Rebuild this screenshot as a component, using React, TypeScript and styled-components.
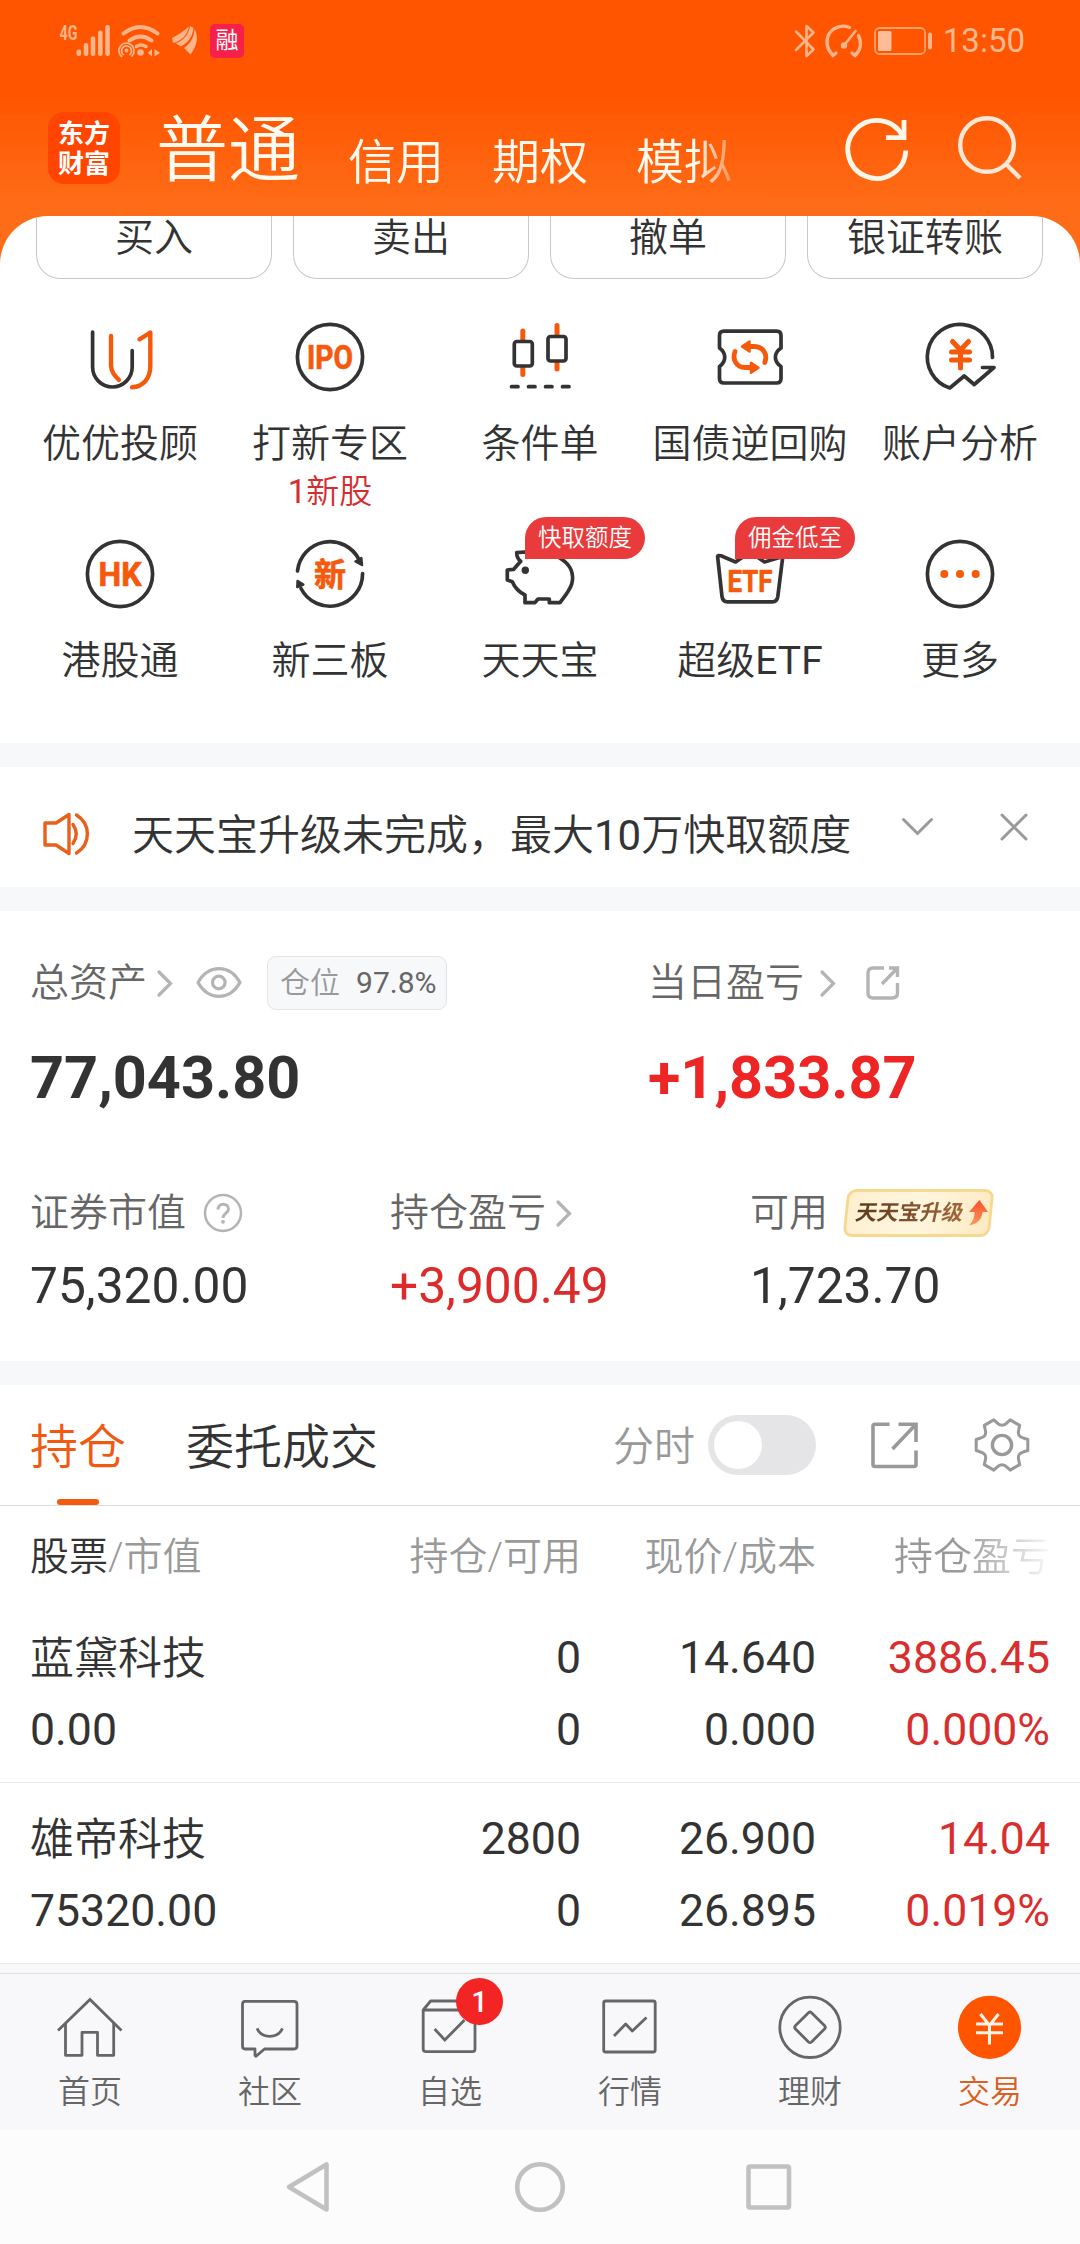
import React from "react";
import styled, { createGlobalStyle } from "styled-components";

const GlobalStyle = createGlobalStyle`
  * { box-sizing: border-box; }
  body {
    margin: 0;
    background: #fff;
    font-family: Roboto, "Noto Sans CJK SC", sans-serif;
    font-weight: 350;
    color: #333;
  }
  svg { display: block; flex: none; overflow: visible; }
`;

const INK = "#333";
const ORANGE = "#f55a0c";

/* ---------- layout ---------- */

const Screen = styled.div`
  width: 1080px;
  height: 2244px;
  overflow: hidden;
  display: flex;
  flex-direction: column;
  background: linear-gradient(180deg, #ff5500 0, #ff5500 95px, #ff6c17 205px, #ff6c17 300px, #fff 301px);
`;

const StatusBar = styled.div`
  height: 82px;
  flex: none;
  display: flex;
  justify-content: space-between;
  padding: 0 55px 0 58px;
`;

const StatusGroup = styled.div`
  display: flex;
  height: 82px;
  align-items: center;
`;

const Clock = styled.span`
  font-size: 33px;
  font-weight: 400;
  line-height: 40px;
  margin-left: 10px;
  color: #ffb88f;
`;

const AppBadge = styled.span`
  width: 34px;
  height: 34px;
  margin-left: 12px;
  border-radius: 5px;
  background: #f6204a;
  color: #fff;
  font-size: 23px;
  line-height: 34px;
  font-weight: 400;
  text-align: center;
`;

const Header = styled.header`
  height: 134px;
  flex: none;
  display: flex;
  align-items: flex-start;
  padding: 30px 59px 0 48px;
`;

const Logo = styled.div`
  width: 72px;
  height: 72px;
  border-radius: 16px;
  background: #ff4500;
  color: #fff;
  font-size: 26px;
  line-height: 30px;
  font-weight: 700;
  text-align: center;
  padding-top: 7px;
`;

const AccountTabs = styled.nav`
  display: flex;
  align-items: flex-end;
  gap: 48px;
  width: 596px;
  margin-left: 36px;
  margin-top: -9px;
  white-space: nowrap;
  mask-image: linear-gradient(90deg, #000 540px, transparent 592px);
`;

const AccountTab = styled.span<{ $active?: boolean }>`
  font-size: ${(p) => (p.$active ? 72 : 48)}px;
  line-height: ${(p) => (p.$active ? 96 : 72)}px;
  color: #fffaf0;
`;

const HeaderActions = styled.div`
  display: flex;
  gap: 42px;
  margin-left: auto;
`;

const Panel = styled.section`
  height: 527px;
  flex: none;
  overflow: hidden;
  border-radius: 48px 48px 0 0;
  background: #fff;
`;

const QuickRow = styled.div`
  display: grid;
  grid-template-columns: repeat(4, 236px);
  gap: 21px;
  padding: 0 36px;
`;

const QuickButton = styled.div`
  height: 63px;
  border: 1px solid #c8c8c8;
  border-top: 0;
  border-radius: 0 0 24px 24px;
  text-align: center;
  font-size: 39px;
  line-height: 44px;
`;

const FeatureGrid = styled.div`
  display: grid;
  grid-template-columns: repeat(5, 210px);
  grid-template-rows: 217px 205px;
  padding: 42px 15px 0;
`;

const Feature = styled.div`
  position: relative;
  display: flex;
  flex-direction: column;
  align-items: center;
`;

const FeatureLabel = styled.span`
  margin-top: 24px;
  font-size: 39px;
  line-height: 54px;
  white-space: nowrap;
`;

const FeatureNote = styled.span`
  font-size: 33px;
  line-height: 42px;
  color: #d32f2f;
`;

const FeatureBadge = styled.span`
  position: absolute;
  left: 90px;
  top: -21px;
  width: 120px;
  height: 42px;
  border-radius: 21px 21px 21px 0;
  background: #ea3b3c;
  color: #fff;
  font-size: 23.5px;
  line-height: 42px;
  text-align: center;
`;

const Latin = styled.span`
  font-weight: 400;
`;

const Strip = styled.div<{ $h: number }>`
  height: ${(p) => p.$h}px;
  flex: none;
  background: #f7f8fa;
`;

const Notice = styled.section`
  height: 120px;
  flex: none;
  display: flex;
  align-items: center;
  padding: 0 51px 0 42px;
  background: #fff;
`;

const NoticeIcon = styled.span`
  margin-top: 13px;
`;

const NoticeText = styled.span`
  flex: 1;
  margin: 18px 0 0 42px;
  font-size: 42px;
  line-height: 54px;
  white-space: nowrap;
`;

const NoticeActions = styled.div`
  display: flex;
  align-items: center;
  gap: 65px;
`;

const Assets = styled.section`
  height: 450px;
  flex: none;
  padding: 45px 0 0 30px;
  background: #fff;
`;

const TotalsRow = styled.div`
  display: grid;
  grid-template-columns: 618px 1fr;
`;

const DetailRow = styled.div`
  display: grid;
  grid-template-columns: repeat(3, 360px);
  margin-top: 75px;
  width: 1080px;
`;

const Caption = styled.div<{ $h: number }>`
  display: flex;
  align-items: center;
  height: ${(p) => p.$h}px;
  font-size: 39px;
  line-height: 48px;
  color: #666;
`;

const Spacer = styled.i<{ $w: number }>`
  flex: none;
  width: ${(p) => p.$w}px;
`;

const PositionTag = styled.span`
  display: flex;
  align-items: center;
  gap: 16px;
  width: 180px;
  height: 54px;
  padding-left: 12px;
  border: 1px solid #e3e4e6;
  border-radius: 9px;
  background: #f7f8fa;
  font-size: 30px;
  line-height: 40px;
  color: #999;
`;

const PositionValue = styled.span`
  font-weight: 400;
  color: #666;
`;

const BigNumber = styled.div<{ $up?: boolean }>`
  margin-top: 32px;
  font-size: 59.4px;
  line-height: 72px;
  font-weight: 700;
  color: ${(p) => (p.$up ? "#ee2525" : INK)};
`;

const MidNumber = styled.div<{ $up?: boolean }>`
  margin-top: 19px;
  font-size: 49.7px;
  line-height: 60px;
  font-weight: 400;
  color: ${(p) => (p.$up ? "#dc2b2b" : INK)};
`;

const UpgradeTag = styled.span`
  display: flex;
  align-items: center;
  gap: 5px;
  width: 147px;
  height: 48px;
  margin-left: 17px;
  padding-left: 8px;
  border: 3px solid #f7d88f;
  border-radius: 9px;
  background: linear-gradient(100deg, #fdf0cf, #fff6e0 50%, #fdeac2);
  transform: skewX(-6deg);
`;

const UpgradeText = styled.span`
  flex: none;
  font-size: 21.5px;
  line-height: 30px;
  font-weight: 700;
  white-space: nowrap;
  transform: skewX(-6deg);
  color: transparent;
  background: linear-gradient(90deg, #5a3a1e, #a3693a);
  background-clip: text;
  -webkit-background-clip: text;
`;

const TabsRow = styled.div`
  height: 121px;
  flex: none;
  display: flex;
  align-items: center;
  padding: 0 50px 0 30px;
  border-bottom: 1px solid #dcdcdc;
  background: #fff;
`;

const HoldTab = styled.span<{ $active?: boolean }>`
  display: flex;
  flex-direction: column;
  align-items: center;
  justify-content: flex-end;
  height: 120px;
  margin-right: 60px;
  font-size: 48px;
  line-height: 66px;
  color: ${(p) => (p.$active ? "#f0590f" : INK)};
  padding-bottom: ${(p) => (p.$active ? 0 : 24)}px;
  &::after {
    content: "";
    display: ${(p) => (p.$active ? "block" : "none")};
    width: 42px;
    height: 6px;
    margin-top: 18px;
    border-radius: 3px;
    background: #f15a0f;
  }
`;

const ToggleLabel = styled.span`
  margin-left: auto;
  margin-right: 13px;
  padding-top: 3px;
  font-size: 41px;
  line-height: 50px;
  color: #999;
`;

const Toggle = styled.span`
  width: 108px;
  height: 60px;
  padding: 6px;
  border-radius: 30px;
  background: #e5e5e7;
  &::before {
    content: "";
    display: block;
    width: 48px;
    height: 48px;
    border-radius: 50%;
    background: #fff;
  }
`;

const TableHead = styled.div`
  height: 96px;
  flex: none;
  display: grid;
  grid-template-columns: 321px 230px 235px 234px;
  padding: 6px 30px 0;
  background: #fff;
  font-size: 39px;
  line-height: 90px;
  color: #999;
`;

const HeadCell = styled.span<{ $fade?: boolean }>`
  text-align: right;
  mask-image: ${(p) => (p.$fade ? "linear-gradient(90deg, #000 145px, transparent 240px)" : "none")};
  &:first-child { text-align: left; }
`;

const HeadStrong = styled.span`
  color: #333;
`;

const Holding = styled.div`
  height: 181px;
  flex: none;
  display: grid;
  grid-template-columns: 321px 230px 235px 234px;
  grid-auto-rows: 72px;
  padding: 21px 30px 0;
  border-bottom: 1px solid #e9e9eb;
  background: #fff;
  font-size: 45px;
  line-height: 71px;
`;

const Cell = styled.span<{ $kind?: "name" | "left" | "up" }>`
  text-align: ${(p) => (p.$kind === "name" || p.$kind === "left" ? "left" : "right")};
  font-size: ${(p) => (p.$kind === "name" ? 44 : 44.6)}px;
  line-height: ${(p) => (p.$kind === "name" ? 72 : 71)}px;
  font-weight: ${(p) => (p.$kind === "name" ? 350 : 400)};
  color: ${(p) => (p.$kind === "up" ? "#d92e2e" : INK)};
`;

const TabBar = styled.nav`
  height: 157px;
  flex: none;
  display: grid;
  grid-template-columns: repeat(6, 180px);
  padding-top: 17px;
  border-top: 1px solid #dfe0e2;
  background: #f8f8fa;
`;

const TabItem = styled.div<{ $active?: boolean }>`
  position: relative;
  display: flex;
  flex-direction: column;
  align-items: center;
  gap: 8px;
  font-size: 32px;
  line-height: 42px;
  color: ${(p) => (p.$active ? "#d9601f" : "#666")};
`;

const CountBadge = styled.span`
  position: absolute;
  left: 96px;
  top: -13px;
  width: 47px;
  height: 47px;
  border-radius: 50%;
  background: #f22424;
  color: #fff;
  font-size: 29px;
  line-height: 48px;
  font-weight: 500;
  text-align: center;
`;

const SystemNav = styled.div`
  height: 114px;
  flex: none;
  display: flex;
  align-items: center;
  justify-content: center;
  gap: 177px;
  background: #fcfcfc;
`;

/* ---------- icons ---------- */

const Box72 = ({ children }: { children: React.ReactNode }) => (
  <svg width="72" height="72" viewBox="0 0 72 72" fill="none" stroke={INK} strokeWidth="3.7" strokeLinecap="round" strokeLinejoin="round">
    {children}
  </svg>
);

const Glyph = ({ x, y, size, width, children }: { x: number; y: number; size: number; width: number; children: string }) => (
  <text x={x} y={y} fontSize={size} fontWeight="700" textLength={width} lengthAdjust="spacingAndGlyphs" fill={ORANGE} stroke={ORANGE} strokeWidth="0.7">
    {children}
  </text>
);

const UuIcon = () => (
  <Box72>
    <path d="M8.6 11V46A19.8 20 0 0 0 48.2 46V29.5" />
    <g stroke={ORANGE} strokeWidth="4.4">
      <path d="M27 15V44C27 51 31 55 35 59" />
      <path d="M55.5 18.3L66.3 11.5V45C66.3 58 59 65.5 48 66.3" />
    </g>
  </Box72>
);

const IpoIcon = () => (
  <Box72>
    <circle cx="36" cy="36" r="32.6" />
    <Glyph x={13} y={47.6} size={33} width={46}>IPO</Glyph>
  </Box72>
);

const CandleIcon = () => (
  <Box72>
    <path d="M18.8 10V53.5M53 4.4V48" stroke={ORANGE} strokeWidth="5" />
    <rect x="10.3" y="20.5" width="18" height="24.5" rx="2.5" fill="#fff" />
    <rect x="44" y="15.5" width="18" height="24.5" rx="2.5" fill="#fff" />
    <path d="M7.5 65.7H14M24.5 65.7H31M41.5 65.7H48M58.5 65.7H65" />
  </Box72>
);

const RepoIcon = () => (
  <Box72>
    <path d="M10 10.2H62.5Q67 10.2 67 14.5V27C59.5 32 59.5 40.5 67 45.5V57.5Q67 62 62.5 62H10Q5.5 62 5.5 57.5V45.5C12.5 40.5 12.5 32 5.5 27V14.5Q5.5 10.2 10 10.2Z" />
    <g stroke={ORANGE} strokeWidth="4.8">
      <path d="M36 25.5H40C49 25.5 54 33 50.8 41.5" />
      <path d="M36 46.5H31C22.5 46.5 18 38.5 21 30.5" />
      <path d="M28 25.500L35.500 20.500V30.500ZM44.500 46.700L37 41.700V51.700Z" fill={ORANGE} strokeWidth="2.500" />
    </g>
  </Box72>
);

const AnalysisIcon = () => (
  <Box72>
    <path d="M68.5 36.5A32.6 32.6 0 1 0 25.8 67L40.2 55L50.2 63.5L70 46.5H58.5" />
    <path d="M28.5 20.5L36.5 29L44.5 20.5M27.5 31H45.5M27.5 39H45.5M36.5 30V47" stroke={ORANGE} strokeWidth="5" />
  </Box72>
);

const HkIcon = () => (
  <Box72>
    <circle cx="36" cy="36" r="32.6" />
    <Glyph x={14.500} y={47.6} size={33} width={43}>HK</Glyph>
  </Box72>
);

const NewBoardIcon = () => (
  <Box72>
    <path d="M3.5 33A32.6 32.6 0 0 1 65 21.5M68.6 35.5A32.6 32.6 0 0 1 7 50.5" />
    <path d="M68 27L61.5 23.5L67.3 20ZM3.6 43L3.3 49L9.3 46.5Z" fill={INK} strokeWidth="2.5" />
    <Glyph x={20} y={48} size={32} width={32}>新</Glyph>
  </Box72>
);

const PiggyIcon = () => (
  <Box72>
    <path d="M57.7 21.3C52 16.5 44 14.5 36 15C30 14.5 26 15 21 14L12.7 14.7C12.7 18.5 13.7 21 16.7 23.3L9.7 31.3L3.3 32V42L8.3 43.7C11 50 15 54 21 57V64.7H31L34 61H45.3V64.7H56C61 58 66 52 67.7 46C70.5 36 66.5 27 57.7 21.3Z" />
    <circle cx="21.3" cy="32.3" r="3.7" fill={INK} stroke="none" />
  </Box72>
);

const EtfIcon = () => (
  <Box72>
    <path d="M3.6 18.5L8 58.5Q8.7 63.8 13.5 63.8H58.5Q63 63.8 63.8 58.5L68.8 18.5L50.5 24L36 14L21.6 24L7 17.8Q3.6 17 3.6 18.5Z" />
    <Glyph x={13.5} y={54} size={32} width={45}>ETF</Glyph>
  </Box72>
);

const MoreIcon = () => (
  <Box72>
    <circle cx="36" cy="36" r="32.6" />
    <g fill={ORANGE} stroke="none">
      <circle cx="20.3" cy="36" r="4" />
      <circle cx="36" cy="36" r="4" />
      <circle cx="51.7" cy="36" r="4" />
    </g>
  </Box72>
);

const ChevronRight = () => (
  <svg width="16" height="28" viewBox="0 0 16 28" fill="none" stroke="#b4b4b4" strokeWidth="3.2" strokeLinecap="round">
    <path d="M2 3L13.5 14.5L2 26" />
  </svg>
);

const EyeIcon = () => (
  <svg width="46" height="34" viewBox="0 0 46 34" fill="none" stroke="#b4b4b4" strokeWidth="3.2">
    <path d="M2 16.5C12.5 -2 33.5 -2 44 16.5C33.5 35 12.5 35 2 16.5Z" strokeLinejoin="round" />
    <circle cx="22.8" cy="16.5" r="6.3" />
  </svg>
);

const ShareSmall = () => (
  <svg width="36" height="36" viewBox="0 0 36 36" fill="none" stroke="#b4b4b4" strokeWidth="3.4">
    <path d="M19 3H8Q3 3 3 8V28Q3 33 8 33H27Q32.5 33 32.5 28V18" />
    <path d="M24 3H32.5V12M32 3.500L17 19" />
  </svg>
);

const ShareLarge = () => (
  <svg width="48" height="48" viewBox="0 0 48 48" fill="none" stroke="#999" strokeWidth="3.6">
    <path d="M19.5 3.3H5Q3 3.3 3 5.3V43.5Q3 45.5 5 45.5H44Q46 45.5 46 43.5V29.5" />
    <path d="M28.5 3.3H46V21M45.5 3.8L22.5 28" />
  </svg>
);

const gearPath = (() => {
  const at = (r: number, deg: number) => {
    const a = (deg * Math.PI) / 180;
    return `${(28 + r * Math.cos(a)).toFixed(1)} ${(28 + r * Math.sin(a)).toFixed(1)}`;
  };
  let d = `M${at(26.4, -12)}`;
  for (let k = 0; k < 6; k++) {
    d += `L${at(26.4, 60 * k + 12)}L${at(23, 60 * k + 17)}Q${at(17, 60 * k + 30)} ${at(23, 60 * k + 43)}L${at(26.4, 60 * k + 48)}`;
  }
  return d + "Z";
})();

const GearIcon = () => (
  <svg width="56" height="56" viewBox="0 0 56 56" fill="none" stroke="#999" strokeWidth="3" strokeLinejoin="round">
    <path d={gearPath} />
    <circle cx="28" cy="28" r="9.6" strokeWidth="3.4" />
  </svg>
);

const HelpIcon = () => (
  <svg width="40" height="40" viewBox="0 0 40 40" fill="none" stroke="#b4b4b4" strokeWidth="2.5">
    <circle cx="20" cy="20" r="18" />
    <path d="M15 16.5C15 9.5 25.5 9.5 25.5 16C25.5 20 20 20.5 20 25" strokeWidth="3" />
    <circle cx="20" cy="28.8" r="1.9" fill="#b4b4b4" stroke="none" />
  </svg>
);

const UpArrow = () => (
  <svg width="19" height="26" viewBox="0 0 19 26">
    <defs>
      <linearGradient id="up" x1="0" y1="0" x2="0" y2="1">
        <stop offset="0" stopColor="#fb4d2c" />
        <stop offset="1" stopColor="#fb9a5a" />
      </linearGradient>
    </defs>
    <path d="M9 0L19 12H13.5C13.5 19 10 24 1 25.5C5 21.5 6 17 5.5 12H0Z" fill="url(#up)" />
  </svg>
);

const SpeakerIcon = () => (
  <svg width="48" height="44" viewBox="0 0 48 44" fill="none" stroke="#e8601c" strokeWidth="3.4" strokeLinejoin="round">
    <path d="M3 11H14L27 2.5V41.5L14 33H3Z" />
    <path d="M31 12.5Q37.5 22 31 31.5M34.5 3C49 12 49 32 34.5 41" strokeLinecap="round" />
  </svg>
);

const SignalIcon = () => (
  <svg width="54" height="36" viewBox="0 0 54 36" fill="#ffb48a">
    <text x="1.5" y="16.8" fontSize="20" fontWeight="700" textLength="18" lengthAdjust="spacingAndGlyphs">4G</text>
    <rect x="18.500" y="26.5" width="4.6" height="6.5" rx="2" />
    <rect x="25.7" y="20" width="4.6" height="13" rx="2" />
    <rect x="32.7" y="13.5" width="4.6" height="19.5" rx="2" />
    <rect x="40" y="7.5" width="4.6" height="25.5" rx="2" />
    <rect x="47.2" y="2" width="4.6" height="31" rx="2" />
  </svg>
);

const WifiIcon = () => (
  <svg width="46" height="36" viewBox="0 0 46 36" fill="none" stroke="#ffb48a" strokeWidth="4" strokeLinecap="round">
    <path d="M6.500 10.500Q23.500 -2.500 40.500 10.500M12.500 17.500Q23.500 9.500 34.500 17.500" />
    <path d="M19.500 23.500Q24 20.500 29 23.500" strokeWidth="3.5" />
    <circle cx="23.500" cy="29.500" r="3.3" fill="#ffb48a" stroke="none" />
    <g strokeWidth="1.8">
      <circle cx="9.500" cy="27.5" r="1.9" fill="#ffb48a" stroke="none" />
      <path d="M6 31.500A5 5 0 1 1 13 31.500" />
      <path d="M4.500 33.500A7.600 7.600 0 1 1 15 33" />
    </g>
    <path d="M35 26V33.500L30.500 30ZM37.500 26V33.500L43 30Z" fill="#ffb48a" stroke="none" />
  </svg>
);

const PlumeIcon = () => (
  <svg width="26" height="30" viewBox="0 0 26 30" fill="#ffb48a">
    <path d="M0 12C6 9 12 5 17 0.500C15.500 9 9 15.500 1 17Z" />
    <path d="M18 0L21.500 2C20.500 12 15 17 9 20.500L4 17.500C12 14 17 8 18 0Z" />
    <path d="M22.500 3C27 11 25 20 18.500 28.500L12 22C19 17 22 11 22.500 3Z" />
  </svg>
);

const BluetoothIcon = () => (
  <svg width="22" height="34" viewBox="0 0 22 34" fill="none" stroke="#ffb48a" strokeWidth="2.6" strokeLinejoin="round" strokeLinecap="round">
    <path d="M2 7.5L19.5 25.5L12.5 32V2L19.5 8.5L2 26" />
  </svg>
);

const GaugeIcon = () => (
  <svg width="38" height="34" viewBox="0 0 38 34" fill="none" stroke="#ffb48a" strokeWidth="3.4" strokeLinecap="round">
    <path d="M24.5 3.5C13 -1 2 7 2 18C2 24 4.5 28 8 31.5L11 29" />
    <path d="M33.5 11.5C37 19 35.5 26.5 30 31.5L27 29" />
    <circle cx="19" cy="21.5" r="3.2" fill="#ffb48a" stroke="none" />
    <path d="M19 21.5L30.5 7" strokeWidth="2.6" />
  </svg>
);

const BatteryIcon = () => (
  <svg width="59" height="28" viewBox="0 0 59 28" fill="none">
    <rect x="1" y="1" width="50" height="26" rx="4.5" stroke="#ffa069" strokeWidth="1.8" />
    <rect x="4" y="4" width="13.5" height="20" rx="1.5" fill="#ffbc98" />
    <rect x="54" y="5.5" width="4" height="17" rx="1.8" fill="#ffb48a" />
  </svg>
);

const RefreshIcon = () => (
  <svg width="68" height="68" viewBox="0 0 68 68" fill="none" stroke="#fff6ea" strokeWidth="4.8">
    <path d="M62.8 38.500A29 29 0 1 1 59.500 24" />
    <path d="M61 8V25.700H43" />
  </svg>
);

const SearchIcon = () => (
  <svg width="68" height="68" viewBox="0 0 68 68" fill="none" stroke="#ffe7d6" strokeWidth="4.4">
    <circle cx="34" cy="33" r="26.8" />
    <path d="M53 52L67 66" />
  </svg>
);

const NavIcon = ({ children }: { children: React.ReactNode }) => (
  <svg width="72" height="72" viewBox="0 0 72 72" fill="none" stroke="#666" strokeWidth="2.8" strokeLinejoin="round">
    {children}
  </svg>
);

/* ---------- data ---------- */

const features: { icon: React.ReactNode; label: React.ReactNode; note?: React.ReactNode; badge?: string }[] = [
  { icon: <UuIcon />, label: "优优投顾" },
  { icon: <IpoIcon />, label: "打新专区", note: <><Latin>1</Latin>新股</> },
  { icon: <CandleIcon />, label: "条件单" },
  { icon: <RepoIcon />, label: "国债逆回购" },
  { icon: <AnalysisIcon />, label: "账户分析" },
  { icon: <HkIcon />, label: "港股通" },
  { icon: <NewBoardIcon />, label: "新三板" },
  { icon: <PiggyIcon />, label: "天天宝", badge: "快取额度" },
  { icon: <EtfIcon />, label: <>超级<Latin>ETF</Latin></>, badge: "佣金低至" },
  { icon: <MoreIcon />, label: "更多" },
];

const holdings = [
  { name: "蓝黛科技", value: "0.00", qty: "0", avail: "0", price: "14.640", cost: "0.000", gain: "3886.45", rate: "0.000%" },
  { name: "雄帝科技", value: "75320.00", qty: "2800", avail: "0", price: "26.900", cost: "26.895", gain: "14.04", rate: "0.019%" },
];

const navItems: { label: string; icon: React.ReactNode; count?: string; active?: boolean }[] = [
  {
    label: "首页",
    icon: <NavIcon><path d="M4 39.5L36 8.5L67.5 39.5" strokeLinejoin="miter" /><path d="M11.5 32V64.3H28V41.3H43.5V64.3H59.7V32" /></NavIcon>,
  },
  {
    label: "社区",
    icon: <NavIcon><path d="M11 10.3H60Q63 10.3 63 13.3V55Q63 58 60 58H30.5L22 65.3L21 64.5V58H11Q8.5 58 8.5 55V13.3Q8.5 10.3 11 10.3Z" /><path d="M23 37.3C28 48 43.5 48 48.5 37.3" /></NavIcon>,
  },
  {
    label: "自选",
    icon: <NavIcon><path d="M9.2 19L16.6 10H54L61 19V58Q61 60.7 58.5 60.7H12Q9.2 60.7 9.2 58ZM9.2 19H61" /><path d="M20.6 38L30.8 49L50.5 29" strokeLinejoin="miter" /></NavIcon>,
    count: "1",
  },
  {
    label: "行情",
    icon: <NavIcon><rect x="9.7" y="10" width="51.5" height="51" rx="2" /><path d="M20 45L31.7 33L38.3 40L52.5 26.5" /></NavIcon>,
  },
  {
    label: "理财",
    icon: <NavIcon><circle cx="36" cy="36.3" r="30.2" /><path d="M34.5 21.7Q36 20.3 37.5 21.7L50.7 34.8Q52 36.3 50.7 37.8L37.5 51Q36 52.3 34.5 51L21.3 37.8Q20 36.3 21.3 34.8Z" /></NavIcon>,
  },
  {
    label: "交易",
    icon: <NavIcon><circle cx="35.5" cy="36.3" r="31.6" fill="#ff5500" stroke="none" /><path d="M26.5 23L35.5 34.5L44.500 23M22 33H49M22 41.7H49M35.5 33.5V53.5" stroke="#fff3e8" strokeWidth="3" strokeLinejoin="miter" /></NavIcon>,
    active: true,
  },
];

export default function App() {
  return (
    <Screen>
      <GlobalStyle />
      <StatusBar>
        <StatusGroup>
          <SignalIcon />
          <Spacer $w={5} />
          <WifiIcon />
          <Spacer $w={9} />
          <PlumeIcon />
          <AppBadge>融</AppBadge>
        </StatusGroup>
        <StatusGroup>
          <BluetoothIcon />
          <Spacer $w={9} />
          <GaugeIcon />
          <Spacer $w={11} />
          <BatteryIcon />
          <Clock>13:50</Clock>
        </StatusGroup>
      </StatusBar>

      <Header>
        <Logo>东方<br />财富</Logo>
        <AccountTabs>
          <AccountTab $active>普通</AccountTab>
          <AccountTab>信用</AccountTab>
          <AccountTab>期权</AccountTab>
          <AccountTab>模拟</AccountTab>
        </AccountTabs>
        <HeaderActions>
          <RefreshIcon />
          <SearchIcon />
        </HeaderActions>
      </Header>

      <Panel>
        <QuickRow>
          {["买入", "卖出", "撤单", "银证转账"].map((t) => (
            <QuickButton key={t}>{t}</QuickButton>
          ))}
        </QuickRow>
        <FeatureGrid>
          {features.map((f, i) => (
            <Feature key={i}>
              {f.icon}
              <FeatureLabel>{f.label}</FeatureLabel>
              {f.note && <FeatureNote>{f.note}</FeatureNote>}
              {f.badge && <FeatureBadge>{f.badge}</FeatureBadge>}
            </Feature>
          ))}
        </FeatureGrid>
      </Panel>

      <Strip $h={24} />

      <Notice>
        <NoticeIcon><SpeakerIcon /></NoticeIcon>
        <NoticeText>天天宝升级未完成，最大<Latin>10</Latin>万快取额度</NoticeText>
        <NoticeActions>
          <svg width="33" height="22" viewBox="0 0 33 22" fill="none" stroke="#999" strokeWidth="3" strokeLinecap="round">
            <path d="M2.5 3.5L16.5 17.5L30.5 3.5" />
          </svg>
          <svg width="30" height="30" viewBox="0 0 30 30" fill="none" stroke="#999" strokeWidth="3" strokeLinecap="round">
            <path d="M3 3L27 27M27 3L3 27" />
          </svg>
        </NoticeActions>
      </Notice>

      <Strip $h={24} />

      <Assets>
        <TotalsRow>
          <div>
            <Caption $h={54}>
              总资产
              <Spacer $w={10} />
              <ChevronRight />
              <Spacer $w={23} />
              <EyeIcon />
              <Spacer $w={25} />
              <PositionTag>仓位<PositionValue>97.8%</PositionValue></PositionTag>
            </Caption>
            <BigNumber>77,043.80</BigNumber>
          </div>
          <div>
            <Caption $h={54}>
              当日盈亏
              <Spacer $w={16} />
              <ChevronRight />
              <Spacer $w={29} />
              <ShareSmall />
            </Caption>
            <BigNumber $up>+1,833.87</BigNumber>
          </div>
        </TotalsRow>
        <DetailRow>
          <div>
            <Caption $h={48}>
              证券市值
              <Spacer $w={17} />
              <HelpIcon />
            </Caption>
            <MidNumber>75,320.00</MidNumber>
          </div>
          <div>
            <Caption $h={48}>
              持仓盈亏
              <Spacer $w={10} />
              <ChevronRight />
            </Caption>
            <MidNumber $up>+3,900.49</MidNumber>
          </div>
          <div>
            <Caption $h={48}>
              可用
              <UpgradeTag>
                <UpgradeText>天天宝升级</UpgradeText>
                <UpArrow />
              </UpgradeTag>
            </Caption>
            <MidNumber>1,723.70</MidNumber>
          </div>
        </DetailRow>
      </Assets>

      <Strip $h={24} />

      <TabsRow>
        <HoldTab $active>持仓</HoldTab>
        <HoldTab>委托成交</HoldTab>
        <ToggleLabel>分时</ToggleLabel>
        <Toggle />
        <Spacer $w={54} />
        <ShareLarge />
        <Spacer $w={56} />
        <GearIcon />
      </TabsRow>

      <TableHead>
        <HeadCell><HeadStrong>股票</HeadStrong>/市值</HeadCell>
        <HeadCell>持仓/可用</HeadCell>
        <HeadCell>现价/成本</HeadCell>
        <HeadCell $fade>持仓盈亏</HeadCell>
      </TableHead>

      {holdings.map((h) => (
        <Holding key={h.name}>
          <Cell $kind="name">{h.name}</Cell>
          <Cell>{h.qty}</Cell>
          <Cell>{h.price}</Cell>
          <Cell $kind="up">{h.gain}</Cell>
          <Cell $kind="left">{h.value}</Cell>
          <Cell>{h.avail}</Cell>
          <Cell>{h.cost}</Cell>
          <Cell $kind="up">{h.rate}</Cell>
        </Holding>
      ))}

      <Strip $h={9} />

      <TabBar>
        {navItems.map((n) => (
          <TabItem key={n.label} $active={n.active}>
            {n.icon}
            <span>{n.label}</span>
            {n.count && <CountBadge>{n.count}</CountBadge>}
          </TabItem>
        ))}
      </TabBar>

      <SystemNav>
        <svg width="52" height="54" viewBox="0 0 52 54" fill="none" stroke="#c1c1c1" strokeWidth="4.6" strokeLinejoin="round">
          <path d="M4 27L41.500 4.500V49.500Z" />
        </svg>
        <svg width="54" height="54" viewBox="0 0 54 54" fill="none" stroke="#c1c1c1" strokeWidth="4.6">
          <circle cx="26" cy="27" r="22.8" />
        </svg>
        <svg width="50" height="54" viewBox="0 0 50 54" fill="none" stroke="#c1c1c1" strokeWidth="4.6">
          <rect x="3.500" y="6.5" width="40.5" height="41" rx="1.5" />
        </svg>
      </SystemNav>
    </Screen>
  );
}
